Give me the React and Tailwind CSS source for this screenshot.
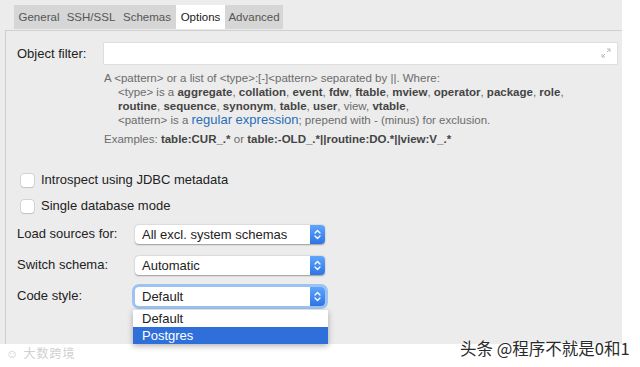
import { useState } from "react";

const tabs = [
  { name: "General", w: "w-[50px]" },
  { name: "SSH/SSL", w: "w-[54px]" },
  { name: "Schemas", w: "w-[58px]" },
  { name: "Options", w: "w-[49px]" },
  { name: "Advanced", w: "w-[58px]" },
];

function Stepper() {
  return (
    <div className="w-[15px] self-stretch rounded-r-[4px] bg-gradient-to-b from-[#5ea6fb] to-[#2d74e6] flex items-center justify-center">
      <svg width="7" height="11" viewBox="0 0 7 11" fill="none" stroke="white" strokeWidth="1.3" strokeLinecap="round" strokeLinejoin="round">
        <path d="M1 4 L3.5 1.5 L6 4" />
        <path d="M1 7 L3.5 9.5 L6 7" />
      </svg>
    </div>
  );
}

function Select({ value, focused }) {
  return (
    <div
      className={`w-[190px] h-[19px] flex items-stretch bg-white rounded-[4px] ${
        focused
          ? "ring-[3px] ring-[#9cc3f3] shadow-[0_0_0_1px_#6aa2ec]"
          : "shadow-[0_0.5px_1.5px_rgba(0,0,0,0.35)]"
      }`}
    >
      <div className="flex-1 pl-[7px] text-[13px] leading-[19px] text-[#222]">{value}</div>
      <Stepper />
    </div>
  );
}

function Checkbox({ label }) {
  return (
    <div className="flex items-center h-[16px]">
      <div className="w-[13px] h-[13px] ml-[15px] rounded-[3px] bg-white shadow-[0_0_0_0.5px_#bdbdbd,0_0.5px_1px_rgba(0,0,0,0.15)]" />
      <span className="ml-[7px] text-[13px] text-[#222]">{label}</span>
    </div>
  );
}

function Row({ label, children }) {
  return (
    <div className="flex items-center h-[20px]">
      <div className="w-[118px] text-[13px] text-[#222]">{label}</div>
      {children}
    </div>
  );
}

export default function App() {
  const [active] = useState("Options");

  return (
    <div
      className="relative w-[640px] h-[367px] overflow-hidden bg-white"
      style={{ fontFamily: '"Liberation Sans", Arial, "Noto Sans CJK SC", sans-serif' }}
    >
      <div className="w-[622px] h-[344px] bg-[#ececec] pt-[5px]">
        {/* tabs */}
        <div className="flex ml-[14px] h-[24px] bg-[#d6d6d6] w-fit">
          {tabs.map((t) => (
            <div
              key={t.name}
              className={`${t.w} text-center text-[11.5px] leading-[24px] ${
                t.name === active ? "bg-white text-[#1a1a1a]" : "text-[#555]"
              }`}
            >
              {t.name}
            </div>
          ))}
        </div>

        {/* panel */}
        <div className="ml-[5px] mt-[1px] h-[314px] border-t border-l border-[#cfcfcf] bg-[#ececec] pl-[11px]">
          <div className="flex items-center mt-[12px]">
            <div className="w-[87px] text-[13px] text-[#222]">Object filter:</div>
            <div className="relative w-[513px] h-[21px] bg-white shadow-[0_0_0_0.5px_#cfcfcf]">
              <svg className="absolute right-[6px] top-[5px]" width="10" height="10" viewBox="0 0 10 10" fill="none" stroke="#bbb" strokeWidth="1">
                <path d="M6 1 H9 V4 M9 1 L6 4" />
                <path d="M1 6 V9 H4 M1 9 L4 6" />
              </svg>
            </div>
          </div>

          <div className="ml-[87px] mt-[7px] text-[11.5px] leading-[14px] text-[#6b6b6b]">
            <div>A &lt;pattern&gt; or a list of &lt;type&gt;:[-]&lt;pattern&gt; separated by ||. Where:</div>
            <div className="pl-[14px]">
              &lt;type&gt; is a{" "}
              <b className="text-[#444]">aggregate</b>, <b className="text-[#444]">collation</b>,{" "}
              <b className="text-[#444]">event</b>, <b className="text-[#444]">fdw</b>,{" "}
              <b className="text-[#444]">ftable</b>, <b className="text-[#444]">mview</b>,{" "}
              <b className="text-[#444]">operator</b>, <b className="text-[#444]">package</b>,{" "}
              <b className="text-[#444]">role</b>,
            </div>
            <div className="pl-[14px]">
              <b className="text-[#444]">routine</b>, <b className="text-[#444]">sequence</b>,{" "}
              <b className="text-[#444]">synonym</b>, <b className="text-[#444]">table</b>,{" "}
              <b className="text-[#444]">user</b>, view, <b className="text-[#444]">vtable</b>,
            </div>
            <div className="pl-[14px]">
              &lt;pattern&gt; is a{" "}
              <span className="text-[13px] text-[#2a6db8]">regular expression</span>; prepend with - (minus) for exclusion.
            </div>
            <div className="mt-[5px]">
              Examples: <b className="text-[#444]">table:CUR_.*</b> or{" "}
              <b className="text-[#444]">table:-OLD_.*||routine:DO.*||view:V_.*</b>
            </div>
          </div>

          <div className="mt-[26px] flex flex-col gap-[10px] -ml-[11px]">
            <Checkbox label="Introspect using JDBC metadata" />
            <Checkbox label="Single database mode" />
          </div>

          <div className="mt-[10px] flex flex-col gap-[11px]">
            <Row label="Load sources for:">
              <Select value="All excl. system schemas" />
            </Row>
            <Row label="Switch schema:">
              <Select value="Automatic" />
            </Row>
            <Row label="Code style:">
              <div className="relative">
                <Select value="Default" focused />
                <div className="absolute left-[-2px] top-[23px] w-[195px] bg-white shadow-[0_2px_6px_rgba(0,0,0,0.3)] text-[13px] z-10">
                  <div className="h-[17px] leading-[17px] pl-[9px] text-[#222]">Default</div>
                  <div className="h-[17px] leading-[17px] pl-[9px] bg-[#2f6fda] text-white">Postgres</div>
                </div>
              </div>
            </Row>
          </div>
        </div>
      </div>

      <div className="absolute left-[6px] top-[345px] text-[12px] text-[#d0d0d0] tracking-[1px]">
        ☺ 大数跨境
      </div>
      <div
        className="absolute left-[460px] top-[336px] text-[16.5px] text-[#2a2a2a] [text-shadow:0_0_2px_#fff,0_0_2px_#fff]"
        style={{ fontFamily: '"Noto Sans CJK SC", sans-serif' }}
      >
        头条 @程序不就是0和1
      </div>
    </div>
  );
}
